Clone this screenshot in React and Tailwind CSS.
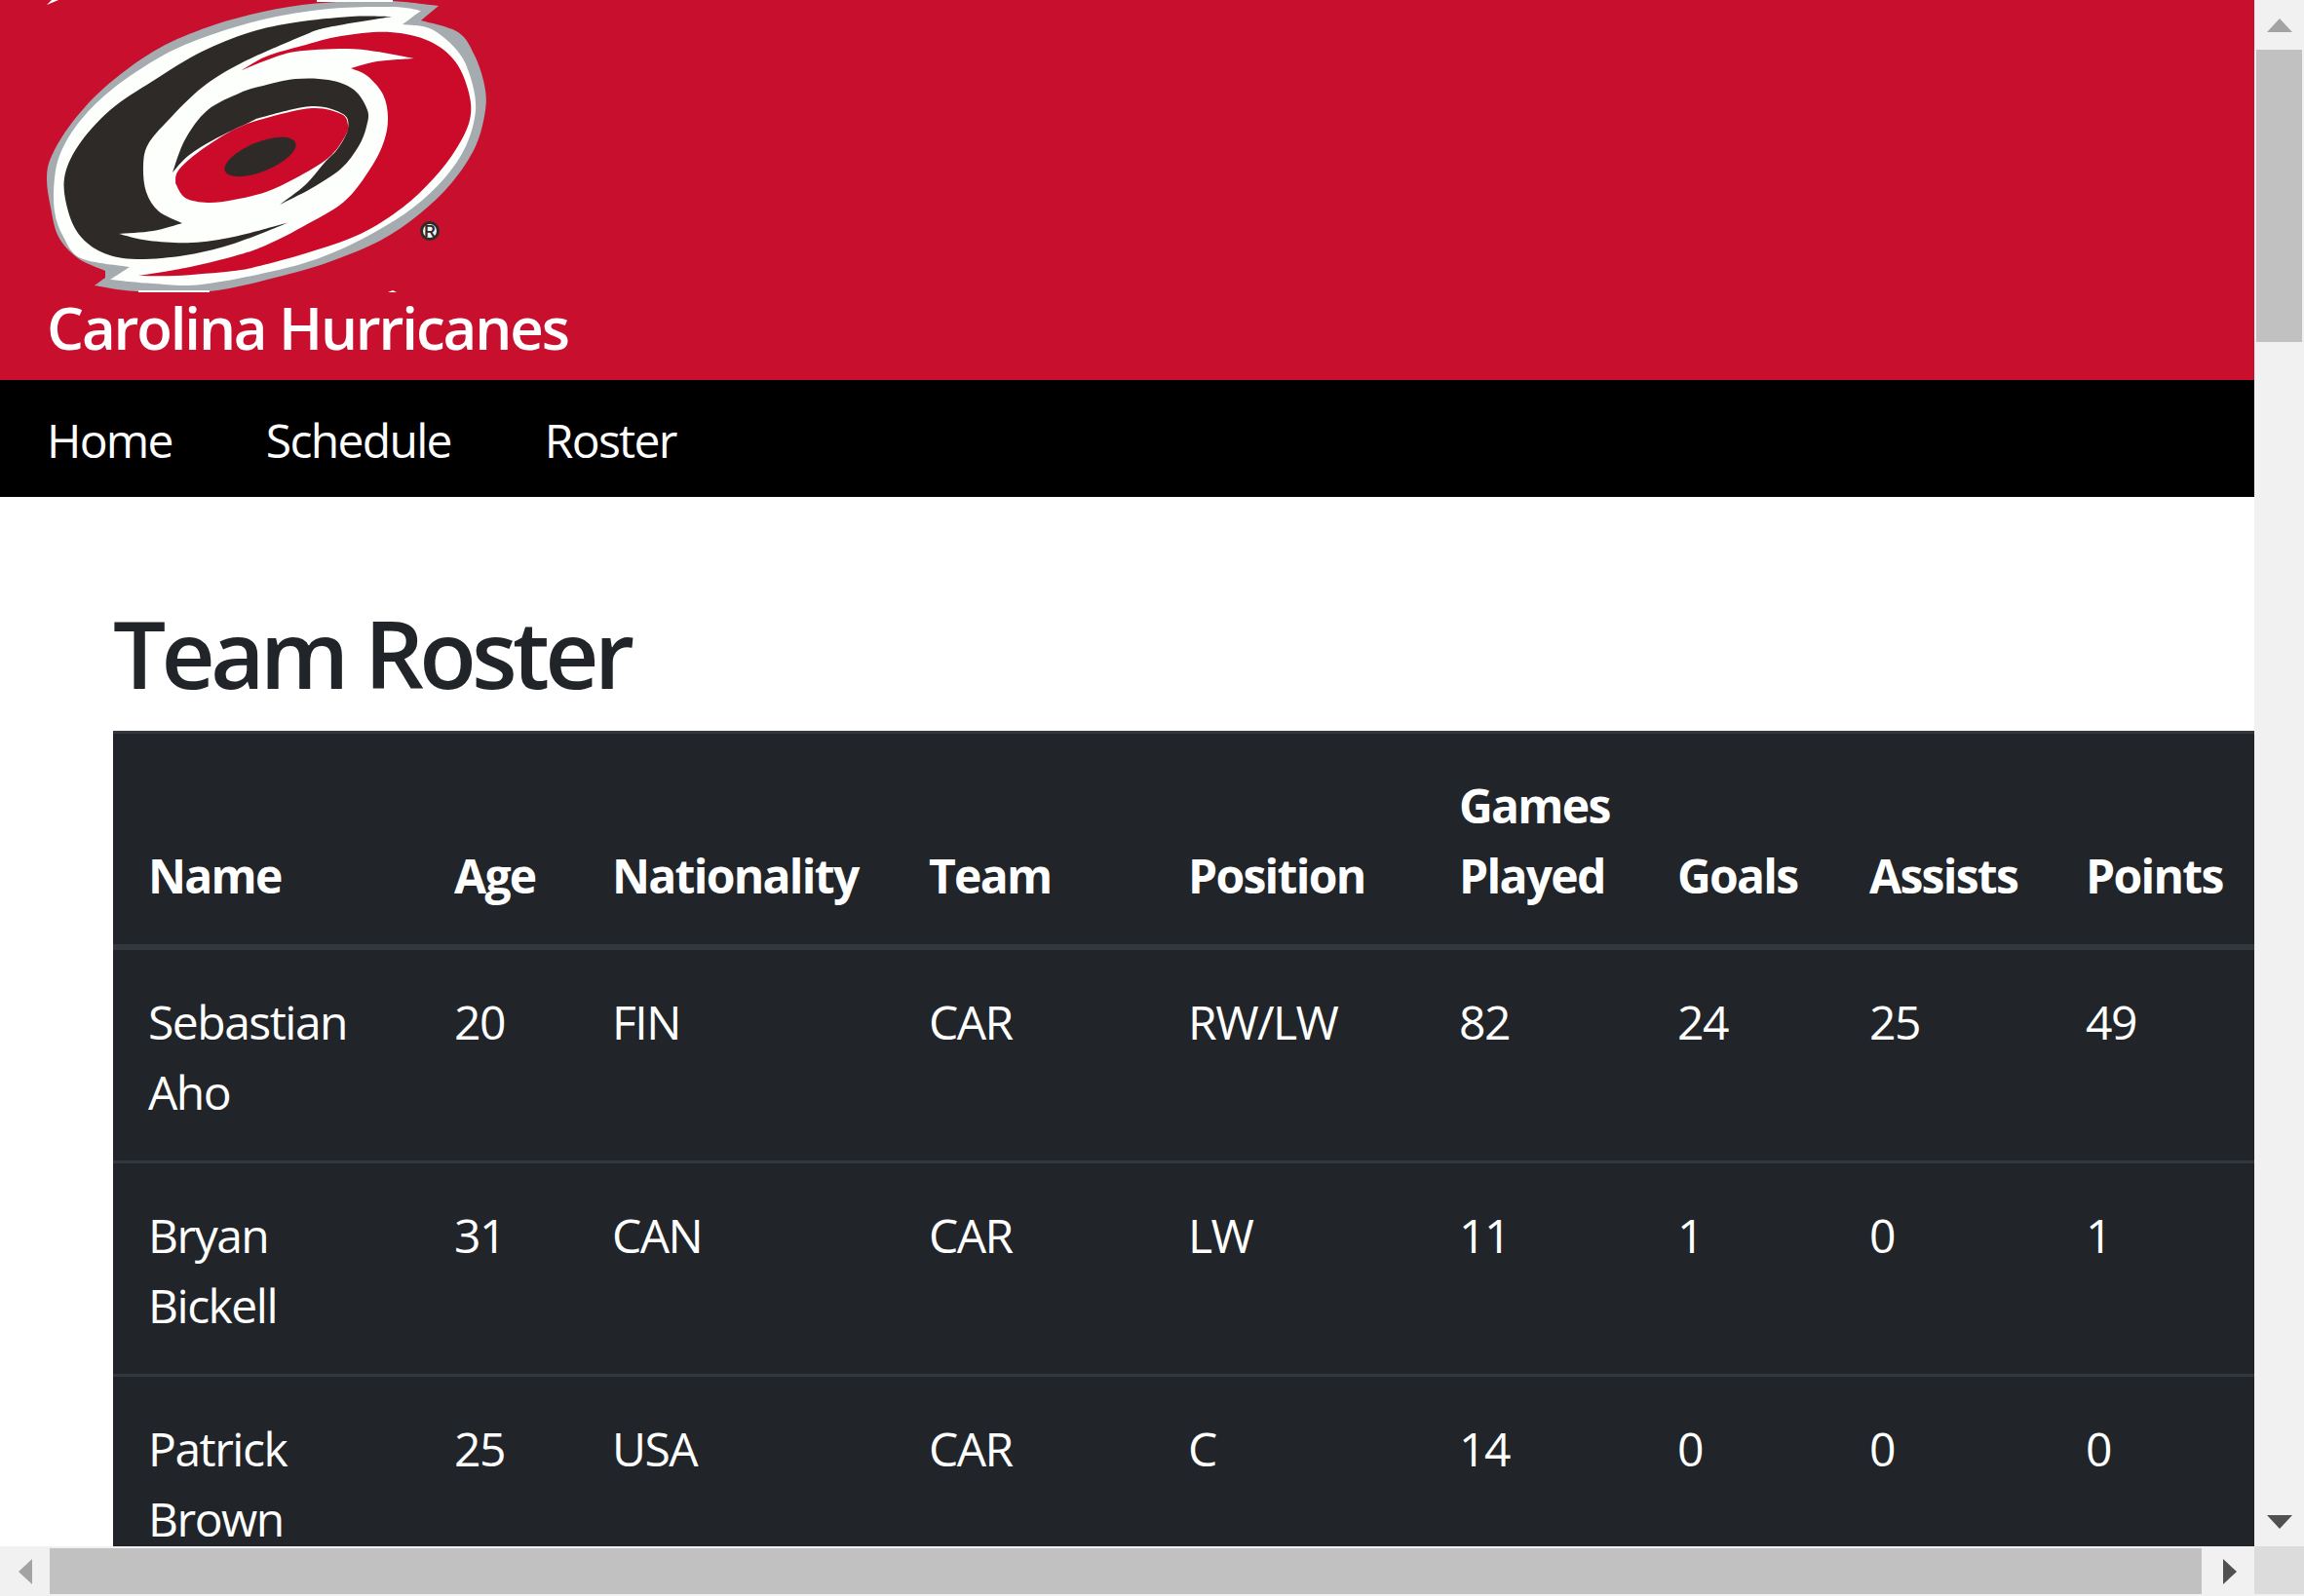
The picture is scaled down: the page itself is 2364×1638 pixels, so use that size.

import React from "react";

function seg(pts, move) {
  let d = move ? `M${pts[0][0]} ${pts[0][1]}` : "";
  for (let i = 0; i < pts.length - 1; i++) {
    const p0 = pts[i - 1] || pts[i];
    const p1 = pts[i];
    const p2 = pts[i + 1];
    const p3 = pts[i + 2] || p2;
    const c1 = [p1[0] + (p2[0] - p0[0]) / 6, p1[1] + (p2[1] - p0[1]) / 6];
    const c2 = [p2[0] - (p3[0] - p1[0]) / 6, p2[1] - (p3[1] - p1[1]) / 6];
    d += `C${c1[0].toFixed(1)} ${c1[1].toFixed(1)} ${c2[0].toFixed(1)} ${c2[1].toFixed(1)} ${p2[0]} ${p2[1]}`;
  }
  return d;
}
const shape = (...segs) => segs.map((s, i) => seg(s, i === 0)).join("") + "Z";

const GRAY = shape(
  [[450,6],[432,21]],
  [[432,21],[470,33],[487,57],[497,87],[498,113],[488,150],[464,187],[430,220],[390,247],[340,268],[290,283],[215,299],[140,299],[97,293]],
  [[97,293],[108,285]],
  [[108,285],[108,278]],
  [[108,278],[80,265],[60,243],[52,213],[48,183],[53,160],[73,127],[107,90],[157,53],[207,30],[257,15],[310,5],[365,1],[403,1],[450,6]]
);
const WHITE = shape(
  [[432,11],[413,25]],
  [[413,25],[443,30],[470,53],[483,80],[488,113],[478,150],[456,183],[424,213],[385,238],[340,260],[290,276],[207,292],[157,291],[113,287]],
  [[113,287],[133,274]],
  [[133,274],[83,265],[65,243],[56,217],[56,183],[63,155],[83,123],[117,90],[167,57],[213,37],[270,20],[337,9],[403,7],[432,11]]
);
const BLACK_OUTER = shape(
  [[402,17],[360,17],[303,23],[257,33],[207,53],[157,83],[113,113],[80,150],[66,183],[70,217],[83,243],[107,260],[140,266],[190,262],[240,250],[297,228]],
  [[297,228],[240,243],[197,249],[153,247],[122,240]],
  [[122,240],[157,237],[187,229]],
  [[187,229],[163,217],[150,197],[147,170],[152,148],[173,123],[207,90],[247,65],[310,37],[337,28],[402,17]]
);
const RED_OUTER = shape(
  [[248,72],[273,58],[310,47],[350,37],[400,33],[440,42],[467,63],[481,95],[482,123],[468,153],[445,183],[413,213],[370,240],[320,258],[270,272],[240,278],[180,283],[142,283]],
  [[142,283],[190,275],[240,263],[270,253],[310,233],[353,207],[380,173],[394,145],[398,120],[393,97],[377,78],[360,70]],
  [[360,70],[387,63],[425,60]],
  [[425,60],[387,53],[353,50],[303,53],[273,62],[248,72]]
);
const BLACK_INNER = shape(
  [[177,177],[190,143],[213,113],[247,95],[270,88],[303,81],[337,82],[363,92],[377,113],[376,130],[368,150],[350,173],[320,193],[287,210]],
  [[287,210],[313,190],[333,167],[347,152],[357,132],[352,117],[320,109],[270,120],[257,125],[220,143],[193,160],[177,177]]
);
const RED_EYE = shape(
  [[180,188],[190,203],[213,208],[240,205],[273,197],[303,183],[337,162],[354,140],[357,128],[350,117],[320,111],[270,122],[240,133],[205,155],[183,175],[180,188]]
);

function Logo() {
  return (
    <svg viewBox="0 0 520 300" className="block w-[520px] h-[300px] -ml-12" aria-label="Carolina Hurricanes logo">
      <path d="M48 5L60 0H53Z" fill="#fdfffd" />
      <path d={GRAY} fill="#a5abae" />
      <rect x="325" y="0" width="78" height="2" fill="#fdfffd" />
      <rect x="142" y="298" width="73" height="2" fill="#fdfffd" />
      <path d="M398 300L403 298L407 300Z" fill="#fdfffd" />
      <path d={WHITE} fill="#fdfffd" />
      <path d={BLACK_OUTER} fill="#2e2a27" />
      <path d={RED_OUTER} fill="#cc0a2a" />
      <path d={BLACK_INNER} fill="#2e2a27" />
      <path d={RED_EYE} fill="#cc0a2a" />
      <ellipse cx="267" cy="161" rx="39" ry="15" transform="rotate(-22 267 161)" fill="#2e2a27" />
      <circle cx="441" cy="237" r="8.5" fill="#f4f4f4" stroke="#2e2a27" strokeWidth="3" />
      <text x="441" y="243" textAnchor="middle" fontSize="16" fontWeight="700" fill="#2e2a27" fontFamily="Liberation Sans, sans-serif">R</text>
    </svg>
  );
}

const players = [
  ["Sebastian Aho", "20", "FIN", "CAR", "RW/LW", "82", "24", "25", "49"],
  ["Bryan Bickell", "31", "CAN", "CAR", "LW", "11", "1", "0", "1"],
  ["Patrick Brown", "25", "USA", "CAR", "C", "14", "0", "0", "0"],
];
const heads = ["Name", "Age", "Nationality", "Team", "Position", "Games Played", "Goals", "Assists", "Points"];
const widths = ["w-[314px]", "w-[162px]", "w-[325px]", "w-[266px]", "w-[278px]", "w-[224px]", "w-[197px]", "w-[222px]", "w-[230px]"];

function Tri({ d, c }) {
  return (
    <svg viewBox="0 0 26 14" className="block w-[26px] h-[14px]">
      <path d={d} fill={c} />
    </svg>
  );
}

export default function App() {
  return (
    <div className="w-[2364px] h-[1638px] flex flex-col overflow-hidden bg-white font-['Open_Sans',sans-serif]">
      <div className="flex flex-1 min-h-0">
        <div className="flex-1 min-w-0 overflow-hidden">
          <header className="bg-[#c8102e] pl-12 h-[390px]">
            <Logo />
            <h5 className="text-[60px] leading-[72px] font-semibold text-white tracking-[-2.15px]">Carolina Hurricanes</h5>
          </header>
          <nav className="bg-black h-[120px] pt-[3px] flex items-center text-[48px] leading-[72px] text-white font-normal tracking-[-1.7px]">
            <a className="px-12">Home</a>
            <a className="px-12">Schedule</a>
            <a className="px-12">Roster</a>
          </nav>
          <main className="pl-[116px] pt-[102px]">
            <h2 className="text-[96px] leading-[115px] font-semibold text-[#212529] mb-[23px] tracking-[-4.8px] whitespace-nowrap">Team Roster</h2>
            <table className="table-fixed border-collapse bg-[#212529] text-white text-[48px] leading-[72px] w-[2218px] tracking-[-1.5px]">
              <thead>
                <tr>
                  {heads.map((h, i) => (
                    <th key={h} className={`${widths[i]} align-bottom text-left font-bold px-9 pt-[38px] pb-[34px] border-t-[3px] border-b-[6px] border-[#32383e] tracking-[-1.7px]`}>{h}</th>
                  ))}
                </tr>
              </thead>
              <tbody>
                {players.map((p) => (
                  <tr key={p[0]}>
                    {p.map((c, i) => (
                      <td key={i} className="align-top px-9 pt-[38px] pb-[34px] border-t-[3px] border-[#32383e]">{c}</td>
                    ))}
                  </tr>
                ))}
              </tbody>
            </table>
          </main>
        </div>
        <div className="w-[51px] bg-[#f1f1f1] flex flex-col items-center">
          <div className="h-[51px] flex items-center justify-center shrink-0"><Tri d="M13 0L26 14H0Z" c="#a3a3a3" /></div>
          <div className="w-[47px] h-[300px] bg-[#c1c1c1]"></div>
          <div className="flex-1"></div>
          <div className="h-[51px] flex items-center justify-center shrink-0"><Tri d="M0 0H26L13 14Z" c="#505050" /></div>
        </div>
      </div>
      <div className="h-[51px] flex shrink-0 bg-[#f1f1f1]">
        <div className="w-[51px] flex items-center justify-center shrink-0">
          <svg viewBox="0 0 14 26" className="block w-[14px] h-[26px]"><path d="M0 13L14 0V26Z" fill="#a3a3a3" /></svg>
        </div>
        <div className="flex-1 py-[2px]"><div className="h-full w-[2208px] bg-[#c1c1c1]"></div></div>
        <div className="w-[51px] flex items-center justify-center shrink-0">
          <svg viewBox="0 0 14 26" className="block w-[14px] h-[26px]"><path d="M14 13L0 0V26Z" fill="#505050" /></svg>
        </div>
        <div className="w-[51px] h-[49px] bg-[#dcdcdc] shrink-0"></div>
      </div>
    </div>
  );
}
